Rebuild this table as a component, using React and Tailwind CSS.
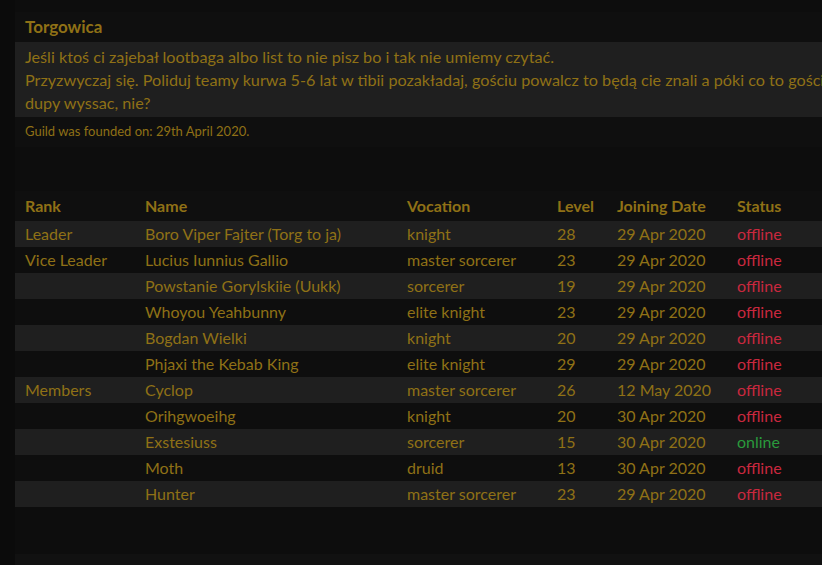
import React from "react";

const gold = "text-[#8f7116]";

const rows = [
  { rank: "Leader", name: "Boro Viper Fajter (Torg to ja)", voc: "knight", lvl: 28, date: "29 Apr 2020", on: false },
  { rank: "Vice Leader", name: "Lucius Iunnius Gallio", voc: "master sorcerer", lvl: 23, date: "29 Apr 2020", on: false },
  { rank: "", name: "Powstanie Gorylskiie (Uukk)", voc: "sorcerer", lvl: 19, date: "29 Apr 2020", on: false },
  { rank: "", name: "Whoyou Yeahbunny", voc: "elite knight", lvl: 23, date: "29 Apr 2020", on: false },
  { rank: "", name: "Bogdan Wielki", voc: "knight", lvl: 20, date: "29 Apr 2020", on: false },
  { rank: "", name: "Phjaxi the Kebab King", voc: "elite knight", lvl: 29, date: "29 Apr 2020", on: false },
  { rank: "Members", name: "Cyclop", voc: "master sorcerer", lvl: 26, date: "12 May 2020", on: false },
  { rank: "", name: "Orihgwoeihg", voc: "knight", lvl: 20, date: "30 Apr 2020", on: false },
  { rank: "", name: "Exstesiuss", voc: "sorcerer", lvl: 15, date: "30 Apr 2020", on: true },
  { rank: "", name: "Moth", voc: "druid", lvl: 13, date: "30 Apr 2020", on: false },
  { rank: "", name: "Hunter", voc: "master sorcerer", lvl: 23, date: "29 Apr 2020", on: false },
];

export default function App() {
  return (
    <div
      className="w-[822px] h-[565px] overflow-hidden bg-[#0b0b0b]"
      style={{ fontFamily: "Lato, 'Noto Sans', sans-serif" }}
    >
      <div className="ml-[15px] w-[900px] min-h-[565px] bg-[#0d0d0d] pt-[12px]">
        {/* Description section */}
        <div className="bg-[#0f0f0f]">
          <div className={`h-[30px] flex items-center px-[10px] font-bold text-[17px] ${gold}`}>Torgowica</div>
          <div className={`bg-[#1f1f1f] px-[10px] py-[3px] text-[16.2px] leading-[23px] whitespace-nowrap ${gold}`}>
            <div>Jeśli ktoś ci zajebał lootbaga albo list to nie pisz bo i tak nie umiemy czytać.</div>
            <div>Przyzwyczaj się. Poliduj teamy kurwa 5-6 lat w tibii pozakładaj, gościu powalcz to będą cie znali a póki co to gościu</div>
            <div>dupy wyssac, nie?</div>
          </div>
          <div className={`px-[10px] h-[30px] flex items-center text-[13px] ${gold}`}>Guild was founded on: 29th April 2020.</div>
        </div>

        <div className="h-[44px]" />

        {/* Members table */}
        <div className="bg-[#0f0f0f]">
          <div className={`flex h-[30px] items-center font-bold text-[16px] ${gold}`}>
            <div className="w-[120px] pl-[10px]">Rank</div>
            <div className="w-[262px] pl-[10px]">Name</div>
            <div className="w-[150px] pl-[10px]">Vocation</div>
            <div className="w-[60px] pl-[10px]">Level</div>
            <div className="w-[120px] pl-[10px]">Joining Date</div>
            <div className="pl-[10px]">Status</div>
          </div>
          {rows.map((r, i) => (
            <div
              key={i}
              className={`flex h-[26px] items-center text-[16px] ${gold} ${i % 2 === 0 ? "bg-[#1f1f1f]" : "bg-[#0e0e0e]"}`}
            >
              <div className="w-[120px] pl-[10px]">{r.rank}</div>
              <div className="w-[262px] pl-[10px]">{r.name}</div>
              <div className="w-[150px] pl-[10px]">{r.voc}</div>
              <div className="w-[60px] pl-[10px]">{r.lvl}</div>
              <div className="w-[120px] pl-[10px]">{r.date}</div>
              <div className={`pl-[10px] ${r.on ? "text-[#2a9a3c]" : "text-[#c9283e]"}`}>{r.on ? "online" : "offline"}</div>
            </div>
          ))}
        </div>

        <div className="h-[47px]" />

        <div className="bg-[#111111] pt-[10px]">
          <div className={`px-[10px] font-bold text-[17px] ${gold}`}>Invited Characters</div>
        </div>
      </div>
    </div>
  );
}
